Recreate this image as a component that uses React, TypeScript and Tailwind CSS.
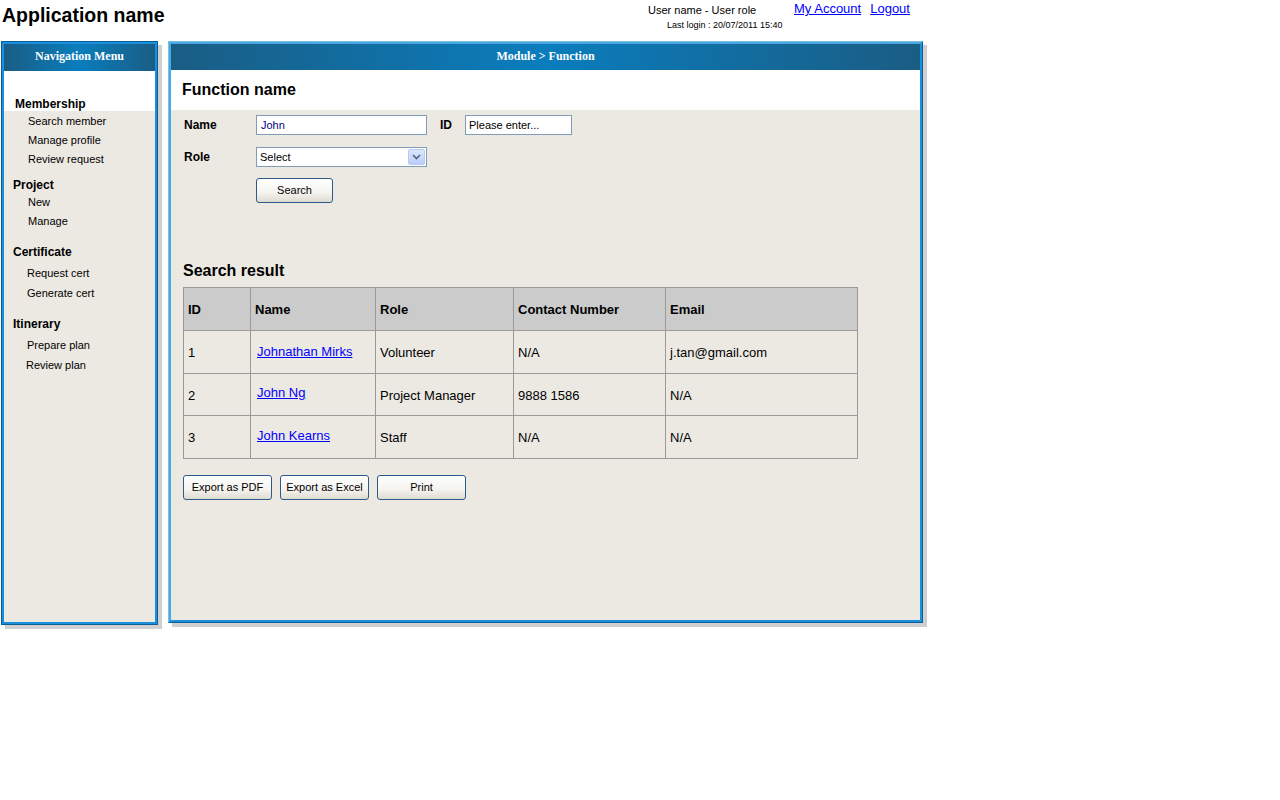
import React from 'react';

const navSections = [
  {
    title: 'Project',
    titleClass: 'mt-[9px] h-[16px] leading-[16px] pl-[9px]',
    itemClass: 'h-[19px] leading-[19px] pl-[24px]',
    items: ['New', 'Manage'],
  },
  {
    title: 'Certificate',
    titleClass: 'mt-[12px] h-[19px] leading-[19px] pl-[9px]',
    itemClass: 'h-[20px] leading-[20px] pl-[23px]',
    items: ['Request cert', 'Generate cert'],
    first: 'mt-[1px]',
  },
  {
    title: 'Itinerary',
    titleClass: 'mt-[12px] h-[19px] leading-[19px] pl-[9px]',
    itemClass: 'h-[20px] leading-[20px]',
    items: ['Prepare plan', 'Review plan'],
    first: 'mt-[1px]',
    pads: ['pl-[23px]', 'pl-[22px]'],
  },
];

const results = [
  { id: '1', name: 'Johnathan Mirks', role: 'Volunteer', contact: 'N/A', email: 'j.tan@gmail.com', h: 'h-[43px]', link: 'pb-0' },
  { id: '2', name: 'John Ng', role: 'Project Manager', contact: '9888 1586', email: 'N/A', h: 'h-[42px]', link: 'pb-[3px]' },
  { id: '3', name: 'John Kearns', role: 'Staff', contact: 'N/A', email: 'N/A', h: 'h-[43px]', link: 'pb-[3px]' },
];

const font = "font-['Liberation_Sans',Arial,sans-serif]";

const PanelHeader: React.FC<{ title: string; h: string }> = ({ title, h }) => (
  <div className={`${h} flex items-center justify-center pb-[3px] bg-[linear-gradient(to_right,#1a5d84,#0a7dbd_50%,#1a5d84)] text-white font-bold text-[12px] font-['Liberation_Serif','Times_New_Roman',serif]`}>
    {title}
  </div>
);

const XpButton: React.FC<{ label: string; w: string }> = ({ label, w }) => (
  <button className={`${w} h-[25px] rounded-[3px] border border-[#2d5a8a] bg-[linear-gradient(to_bottom,#ffffff,#f4f3ee_60%,#dedbd1)] text-[11px] text-black`}>
    {label}
  </button>
);

const NavMenu: React.FC = () => (
  <div className="w-[157px] h-[584px] border border-[#0b5e96] shadow-[4px_4px_0_#cfcfcf] flex">
    <div className="flex-1 border-2 border-[#1c8fdc] flex flex-col bg-[#ece9e3]">
      <PanelHeader title="Navigation Menu" h="h-[27px]" />
      <div className="bg-white h-[40px] pt-[27px] pl-[11px] text-[12px] font-bold leading-[13px]">Membership</div>
      <div className="text-[11px] text-black">
        {['Search member', 'Manage profile', 'Review request'].map((t) => (
          <div key={t} className="h-[19px] leading-[21px] pl-[24px]">{t}</div>
        ))}
        {navSections.map((s) => (
          <div key={s.title}>
            <div className={`${s.titleClass} font-bold text-[12px]`}>{s.title}</div>
            {s.items.map((t, i) => (
              <div
                key={t}
                className={`${s.itemClass} ${s.pads ? s.pads[i] : ''} ${i === 0 && s.first ? s.first : ''}`}
              >
                {t}
              </div>
            ))}
          </div>
        ))}
      </div>
    </div>
  </div>
);

const MainPanel: React.FC = () => (
  <div className="w-[755px] h-[582px] border border-t-[#7cc0e6] border-l-[#7cc0e6] border-r-[#0b5e96] border-b-[#0b5e96] shadow-[4px_4px_0_#cfcfcf] flex">
    <div className="flex-1 border-2 border-t-[#4aa8e0] border-l-[#4aa8e0] border-r-[#1c8fdc] border-b-[#1c8fdc] flex flex-col bg-[#ece9e3]">
      <PanelHeader title="Module > Function" h="h-[26px]" />
      <div className="bg-white h-[40px] flex items-center pl-[11px] text-[16px] font-bold">Function name</div>

      <div className="pl-[13px] pt-[5px] text-[11px]">
        <div className="flex items-center h-[20px]">
          <div className="w-[72px] font-bold text-[12px]">Name</div>
          <input
            readOnly
            value="John"
            className="w-[171px] h-[20px] border border-[#7f9db9] bg-white px-[4px] text-[11px] text-[#000080] outline-none"
          />
          <div className="w-[25px] ml-[13px] font-bold text-[12px]">ID</div>
          <input
            readOnly
            value="Please enter..."
            className="w-[107px] h-[20px] border border-[#7f9db9] bg-white px-[3px] text-[11px] text-black outline-none"
          />
        </div>
        <div className="flex items-center h-[20px] mt-[12px]">
          <div className="w-[72px] font-bold text-[12px]">Role</div>
          <div className="w-[171px] h-[20px] border border-[#7f9db9] bg-white flex items-center justify-between pl-[3px] pr-[1px]">
            <span>Select</span>
            <span className="w-[17px] h-[16px] rounded-[2px] border border-[#b9c9ef] bg-[linear-gradient(to_bottom,#dce6fc,#bccdf7)] flex items-center justify-center">
              <svg width="9" height="6" viewBox="0 0 9 6">
                <path d="M1 1 L4.5 4.5 L8 1" stroke="#4d6185" strokeWidth="1.6" fill="none" />
              </svg>
            </span>
          </div>
        </div>
        <div className="mt-[11px] ml-[72px]">
          <XpButton label="Search" w="w-[77px]" />
        </div>
      </div>

      <div className="pl-[12px] mt-[58px] text-[16px] font-bold leading-[19px]">Search result</div>

      <div className="pl-[12px] mt-[7px]">
        <table className="border-collapse text-[13px] text-black">
          <thead>
            <tr className="h-[43px] bg-[#cbcbcb] font-bold">
              <th className="w-[67px] border border-[#999999] text-left font-bold pl-[4px] pt-[2px]">ID</th>
              <th className="w-[125px] border border-[#999999] text-left font-bold pl-[4px] pt-[2px]">Name</th>
              <th className="w-[138px] border border-[#999999] text-left font-bold pl-[4px] pt-[2px]">Role</th>
              <th className="w-[152px] border border-[#999999] text-left font-bold pl-[4px] pt-[2px]">Contact Number</th>
              <th className="w-[192px] border border-[#999999] text-left font-bold pl-[4px] pt-[2px]">Email</th>
            </tr>
          </thead>
          <tbody>
            {results.map((r) => (
              <tr key={r.id} className={r.h}>
                <td className="border border-[#999999] pl-[4px] pt-[2px]">{r.id}</td>
                <td className={`border border-[#999999] pl-[6px] ${r.link}`}>
                  <a href="#" className="text-[#0000ff] underline">{r.name}</a>
                </td>
                <td className="border border-[#999999] pl-[4px] pt-[2px]">{r.role}</td>
                <td className="border border-[#999999] pl-[4px] pt-[2px]">{r.contact}</td>
                <td className="border border-[#999999] pl-[4px] pt-[2px]">{r.email}</td>
              </tr>
            ))}
          </tbody>
        </table>
      </div>

      <div className="pl-[12px] mt-[16px] flex gap-[8px]">
        <XpButton label="Export as PDF" w="w-[89px]" />
        <XpButton label="Export as Excel" w="w-[89px]" />
        <XpButton label="Print" w="w-[89px]" />
      </div>
    </div>
  </div>
);

export default function App() {
  return (
    <div className={`w-[1280px] h-[800px] bg-white text-black ${font}`}>
      {/* Top bar */}
      <div className="flex h-[41px]">
        <div className="w-[648px] pl-[2px] pt-[3px] text-[19.5px] font-bold leading-[24px]">Application name</div>
        <div className="w-[146px] text-[11px]">
          <div className="pt-[3px] leading-[14px]">User name - User role</div>
          <div className="pl-[19px] text-[9px] leading-[12px] mt-[2px]">Last login : 20/07/2011 15:40</div>
        </div>
        <div className="flex gap-[9px] pt-[1px] text-[13px] leading-[15px]">
          <a href="#" className="text-[#0000ff] underline">My Account</a>
          <a href="#" className="text-[#0000ff] underline">Logout</a>
        </div>
      </div>

      {/* Body */}
      <div className="flex pl-[1px] gap-[10px]">
        <NavMenu />
        <MainPanel />
      </div>
    </div>
  );
}
